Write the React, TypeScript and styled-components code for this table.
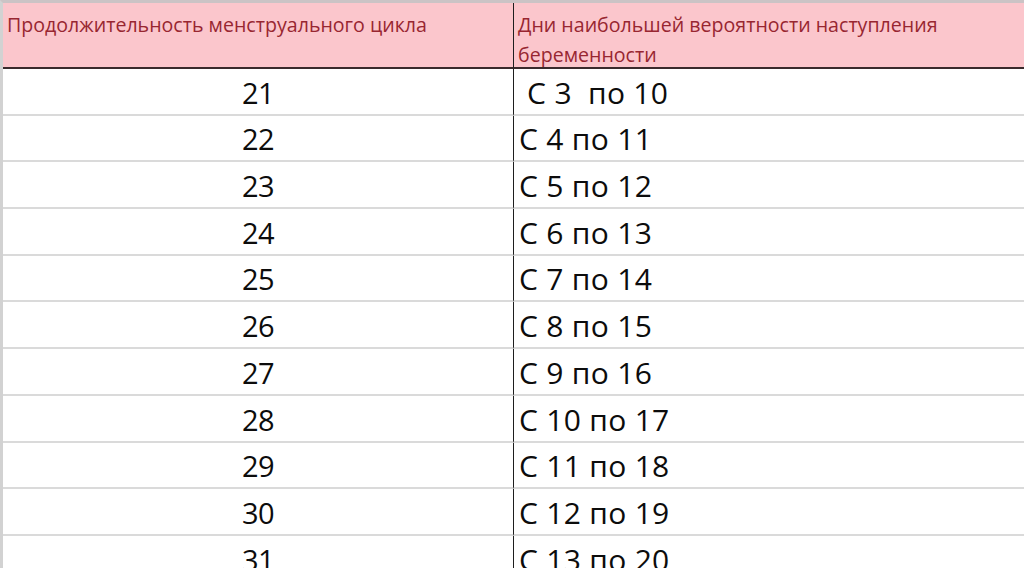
import React from "react";
import styled, { createGlobalStyle } from "styled-components";

const GlobalStyle = createGlobalStyle`
  body {
    margin: 0;
    background: #ffffff;
    font-family: "Open Sans", "Noto Sans", sans-serif;
  }
`;

const Sheet = styled.div`
  display: grid;
  grid-template-columns: 511px 1fr;
  width: 1024px;
  height: 568px;
  overflow: hidden;
  box-sizing: border-box;
  border-top: 3px solid #cbc3c5;
  border-left: 3px solid #d2d2d2;
`;

const HeaderCell = styled.div<{ $divider?: boolean }>`
  box-sizing: border-box;
  height: 66px;
  padding: 7px 3px 0 4px;
  background: #fbc6cc;
  color: #982631;
  font-size: 19.6px;
  line-height: 30px;
  border-bottom: 2px solid #3a2a2c;
  border-right: ${(p) => (p.$divider ? "1px solid #1e1e1e" : "none")};
`;

const Cell = styled.div<{ $center?: boolean; $divider?: boolean }>`
  box-sizing: border-box;
  height: 46.7px;
  display: flex;
  align-items: flex-end;
  justify-content: ${(p) => (p.$center ? "center" : "flex-start")};
  padding: 0 5px 1px;
  color: #0c0c0c;
  font-size: ${(p) => (p.$center ? "29px" : "30px")};
  line-height: 40px;
  letter-spacing: ${(p) => (p.$center ? "-0.6px" : "0.3px")};
  white-space: pre;
  border-bottom: 2px solid #dadada;
  border-right: ${(p) => (p.$divider ? "1px solid #1e1e1e" : "none")};
`;

const rows: [string, string][] = [
  ["21", " С 3  по 10"],
  ["22", "С 4 по 11"],
  ["23", "С 5 по 12"],
  ["24", "С 6 по 13"],
  ["25", "С 7 по 14"],
  ["26", "С 8 по 15"],
  ["27", "С 9 по 16"],
  ["28", "С 10 по 17"],
  ["29", "С 11 по 18"],
  ["30", "С 12 по 19"],
  ["31", "С 13 по 20"],
];

const App = () => {
  return (
    <>
      <GlobalStyle />
      <Sheet>
        <HeaderCell $divider>Продолжительность менструального цикла</HeaderCell>
        <HeaderCell>
          Дни наибольшей вероятности наступления
          <br />
          беременности
        </HeaderCell>
        {rows.map(([len, days]) => (
          <React.Fragment key={len}>
            <Cell $center $divider>
              {len}
            </Cell>
            <Cell>{days}</Cell>
          </React.Fragment>
        ))}
      </Sheet>
    </>
  );
};

export default App;
